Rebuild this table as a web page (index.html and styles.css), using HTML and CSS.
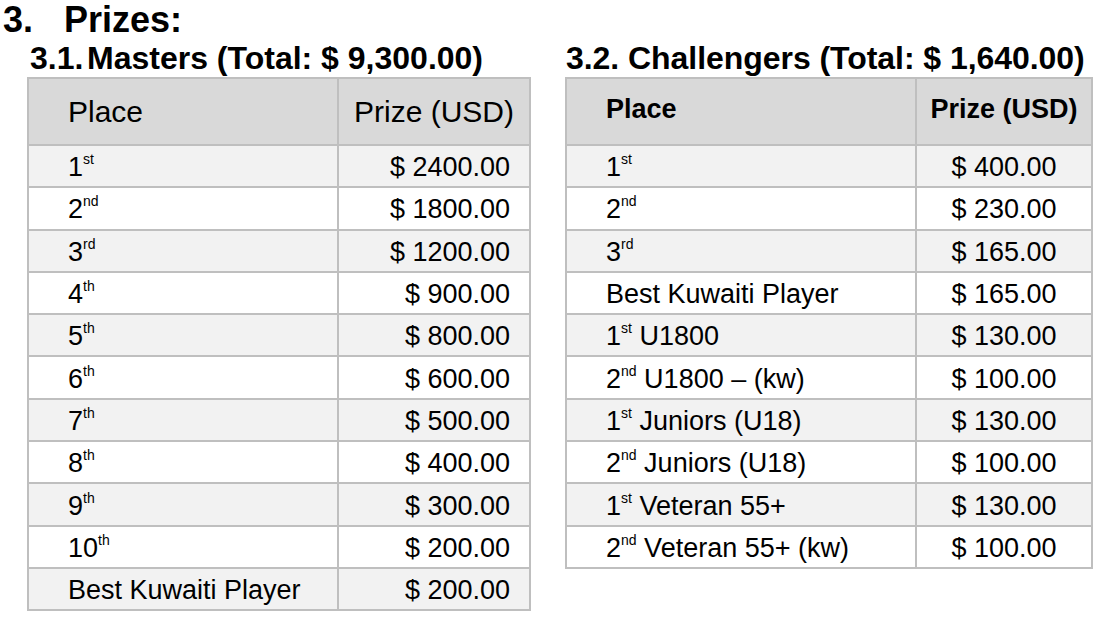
FILE: index.html
```html
<!DOCTYPE html>
<html lang="en">
<head>
<meta charset="utf-8">
<title>Prizes</title>
<link rel="stylesheet" href="styles.css">
</head>
<body>
<h1 class="title"><span class="num">3.</span>Prizes:</h1>
<div class="columns">
  <section class="col col-left">
    <h2 class="sub"><span class="subnum">3.1.</span>Masters (Total: $ 9,300.00)</h2>
    <table class="prizes masters">
      <colgroup><col class="c-place"><col class="c-amount"></colgroup>
      <thead>
        <tr><th class="place">Place</th><th class="amount">Prize (USD)</th></tr>
      </thead>
      <tbody>
        <tr><td class="place">1<sup>st</sup></td><td class="amount">$ 2400.00</td></tr>
        <tr><td class="place">2<sup>nd</sup></td><td class="amount">$ 1800.00</td></tr>
        <tr><td class="place">3<sup>rd</sup></td><td class="amount">$ 1200.00</td></tr>
        <tr><td class="place">4<sup>th</sup></td><td class="amount">$ 900.00</td></tr>
        <tr><td class="place">5<sup>th</sup></td><td class="amount">$ 800.00</td></tr>
        <tr><td class="place">6<sup>th</sup></td><td class="amount">$ 600.00</td></tr>
        <tr><td class="place">7<sup>th</sup></td><td class="amount">$ 500.00</td></tr>
        <tr><td class="place">8<sup>th</sup></td><td class="amount">$ 400.00</td></tr>
        <tr><td class="place">9<sup>th</sup></td><td class="amount">$ 300.00</td></tr>
        <tr><td class="place">10<sup>th</sup></td><td class="amount">$ 200.00</td></tr>
        <tr><td class="place">Best Kuwaiti Player</td><td class="amount">$ 200.00</td></tr>
      </tbody>
    </table>
  </section>
  <section class="col col-right">
    <h2 class="sub">3.2. Challengers (Total: $ 1,640.00)</h2>
    <table class="prizes challengers">
      <colgroup><col class="c-place"><col class="c-amount"></colgroup>
      <thead>
        <tr><th class="place">Place</th><th class="amount">Prize (USD)</th></tr>
      </thead>
      <tbody>
        <tr><td class="place">1<sup>st</sup></td><td class="amount">$ 400.00</td></tr>
        <tr><td class="place">2<sup>nd</sup></td><td class="amount">$ 230.00</td></tr>
        <tr><td class="place">3<sup>rd</sup></td><td class="amount">$ 165.00</td></tr>
        <tr><td class="place">Best Kuwaiti Player</td><td class="amount">$ 165.00</td></tr>
        <tr><td class="place">1<sup>st</sup> U1800</td><td class="amount">$ 130.00</td></tr>
        <tr><td class="place">2<sup>nd</sup> U1800 – (kw)</td><td class="amount">$ 100.00</td></tr>
        <tr><td class="place">1<sup>st</sup> Juniors (U18)</td><td class="amount">$ 130.00</td></tr>
        <tr><td class="place">2<sup>nd</sup> Juniors (U18)</td><td class="amount">$ 100.00</td></tr>
        <tr><td class="place">1<sup>st</sup> Veteran 55+</td><td class="amount">$ 130.00</td></tr>
        <tr><td class="place">2<sup>nd</sup> Veteran 55+ (kw)</td><td class="amount">$ 100.00</td></tr>
      </tbody>
    </table>
  </section>
</div>
</body>
</html>
```

FILE: styles.css
```css
html, body {
  margin: 0;
  padding: 0;
  background: #ffffff;
}

body {
  font-family: "Liberation Sans", Arial, Helvetica, sans-serif;
  color: #000000;
}

.title {
  margin: 0;
  padding-left: 3px;
  font-size: 36px;
  line-height: 40px;
  font-weight: bold;
}

.title .num {
  display: inline-block;
  width: 61px;
}

.columns {
  display: flex;
  gap: 34px;
  padding-left: 27px;
}

.col-left {
  width: 504px;
  flex: none;
}

.col-right {
  width: 528px;
  flex: none;
}

.sub {
  margin: 0;
  font-size: 32px;
  line-height: 37px;
  font-weight: bold;
  white-space: nowrap;
}

.sub .subnum {
  display: inline-block;
  width: 57px;
}

.col-left .sub {
  padding-left: 3px;
}

.col-right .sub {
  padding-left: 1px;
  letter-spacing: -0.05px;
}

.prizes {
  border-collapse: collapse;
  width: 100%;
  border: 2px solid #bfbfbf;
  table-layout: fixed;
}

.masters .c-place {
  width: 310px;
}

.challengers .c-place {
  width: 350px;
}

.prizes th,
.prizes td {
  box-sizing: border-box;
  border: 2px solid #bfbfbf;
  padding: 0;
  font-size: 27px;
  white-space: nowrap;
  vertical-align: middle;
}

.prizes thead tr {
  background: #d9d9d9;
  height: 67px;
}

.prizes tbody tr {
  height: 42.3px;
}

.prizes tbody tr:nth-child(odd) {
  background: #f2f2f2;
}

.prizes tbody tr:nth-child(even) {
  background: #ffffff;
}

.prizes .place {
  text-align: left;
  padding-left: 39px;
}

.masters .amount {
  text-align: right;
  padding-right: 19px;
}

.masters th {
  font-weight: normal;
  font-size: 30px;
}

.masters th.amount {
  padding-right: 15px;
}

.challengers .amount {
  text-align: center;
}

.challengers th {
  font-weight: bold;
  font-size: 27px;
  padding-bottom: 4px;
}

.prizes td {
  line-height: 30px;
  padding-top: 2px;
}

.prizes sup {
  font-size: 14px;
  vertical-align: 12px;
  line-height: 0;
}
```
